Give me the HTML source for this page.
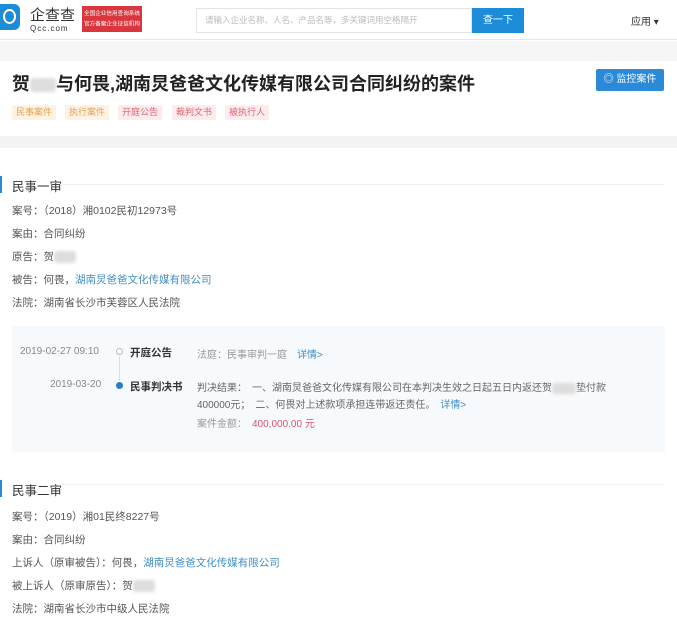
<!DOCTYPE html>
<html><head><meta charset="utf-8"><style>
*{margin:0;padding:0;box-sizing:border-box}
body{width:677px;height:625px;background:#fff;font-family:"Liberation Sans","Noto Sans CJK SC",sans-serif;position:relative;overflow:hidden;color:#333}
.a{position:absolute;white-space:nowrap}
.s{font-size:10.5px;color:#555}
.l{color:#3f8fc7}
.blur{display:inline-block;background:#ddd;border-radius:3px;filter:blur(1.5px);vertical-align:middle}
.tag{position:absolute;top:105px;height:15px;font-size:9px;line-height:15px;padding:0 4px}
</style></head><body>
<div class="a" style="left:0;top:0;width:677px;height:40px;border-bottom:1px solid #e6e6e6"></div>
<div class="a" style="left:0;top:4px;width:20px;height:26px;background:#1d8cd8;border-radius:0 6px 6px 0"></div>
<div class="a" style="left:3px;top:9px;width:13px;height:15px;border:2px solid #fff;border-radius:50%"></div>
<div class="a" style="left:30px;top:4px;font-size:15px;color:#333">企查查</div>
<div class="a" style="left:30px;top:24px;font-size:8px;letter-spacing:1px;color:#333">Qcc.com</div>
<div class="a" style="left:82px;top:6px;width:60px;height:26px;background:#d9363e"></div>
<div class="a" style="left:84px;top:8px;color:#fff;font-size:8px;line-height:15px;transform:scale(0.7);transform-origin:0 0">全国企业信用查询系统<br>官方备案企业征信机构</div>
<div class="a" style="left:196px;top:8px;width:276px;height:25px;border:1px solid #e3e3e3;font-size:8.5px;color:#bbb;line-height:23px;padding-left:8px">请输入企业名称、人名、产品名等，多关键词用空格隔开</div>
<div class="a" style="left:472px;top:8px;width:52px;height:25px;background:#1d8cd8;color:#fff;font-size:10px;line-height:25px;text-align:center">查一下</div>
<div class="a" style="left:631px;top:13px;font-size:10px;color:#333">应用 ▾</div>
<div class="a" style="left:0;top:41px;width:677px;height:20px;background:#f6f6f6"></div>
<div class="a" style="left:0;top:136px;width:677px;height:12px;background:#f3f3f3"></div>
<div class="a" style="left:12px;top:70px;font-size:18px;font-weight:bold;color:#222">贺<span class="blur" style="width:26px;height:14px"></span>与何畏,湖南炅爸爸文化传媒有限公司合同纠纷的案件</div>
<div class="a" style="left:596px;top:69px;width:68px;height:22px;background:#2a8ad8;color:#fff;font-size:10px;line-height:22px;text-align:center;border-radius:2px">◎ 监控案件</div>
<div class="tag" style="left:12px;background:#fdf2e3;color:#e8a24f">民事案件</div>
<div class="tag" style="left:65px;background:#fdf2e3;color:#e8a24f">执行案件</div>
<div class="tag" style="left:118px;background:#fdecee;color:#e4606d">开庭公告</div>
<div class="tag" style="left:172px;background:#fdecee;color:#e4606d">裁判文书</div>
<div class="tag" style="left:225px;background:#fdecee;color:#e4606d">被执行人</div>
<div class="a" style="left:0;top:176px;width:2px;height:17px;background:#2a8ad8"></div>
<div class="a" style="left:62px;top:184px;width:603px;height:1px;background:#f0f0f0"></div>
<div class="a" style="left:12px;top:176px;font-size:12.5px;color:#333">民事一审</div>
<div class="a s" style="left:12px;top:203px">案号：（2018）湘0102民初12973号</div>
<div class="a s" style="left:12px;top:226px">案由：合同纠纷</div>
<div class="a s" style="left:12px;top:249px">原告：贺<span class="blur" style="width:22px;height:12px"></span></div>
<div class="a s" style="left:12px;top:272px">被告：何畏，<span class="l">湖南炅爸爸文化传媒有限公司</span></div>
<div class="a s" style="left:12px;top:295px">法院：湖南省长沙市芙蓉区人民法院</div>
<div class="a" style="left:12px;top:326px;width:653px;height:126px;background:#f7fafd"></div>
<div class="a" style="left:20px;top:346px;font-size:10px;color:#888">2019-02-27 09:10</div>
<div class="a" style="left:116px;top:348px;width:7px;height:7px;border:1px solid #bbb;border-radius:50%;background:#fff"></div>
<div class="a" style="left:119px;top:356px;width:1px;height:25px;background:#ddd"></div>
<div class="a" style="left:130px;top:345px;font-size:10.5px;font-weight:bold;color:#333">开庭公告</div>
<div class="a" style="left:197px;top:346px;font-size:10px;color:#999">法庭：民事审判一庭　<span class="l">详情&gt;</span></div>
<div class="a" style="left:50px;top:379px;font-size:10px;color:#888">2019-03-20</div>
<div class="a" style="left:116px;top:382px;width:7px;height:7px;border-radius:50%;background:#2a7cc8"></div>
<div class="a" style="left:130px;top:379px;font-size:10.5px;font-weight:bold;color:#333">民事判决书</div>
<div class="a" style="left:197px;top:379px;font-size:10px;color:#666">判决结果：　一、湖南炅爸爸文化传媒有限公司在本判决生效之日起五日内返还贺<span class="blur" style="width:24px;height:11px"></span>垫付款</div>
<div class="a" style="left:197px;top:396px;font-size:10px;color:#666">400000元；　二、何畏对上述款项承担连带返还责任。　<span class="l">详情&gt;</span></div>
<div class="a" style="left:197px;top:415px;font-size:10px;color:#999">案件金额：　<span style="color:#d9536a">400,000.00 元</span></div>
<div class="a" style="left:0;top:480px;width:2px;height:17px;background:#2a8ad8"></div>
<div class="a" style="left:62px;top:484px;width:603px;height:1px;background:#f0f0f0"></div>
<div class="a" style="left:12px;top:480px;font-size:12.5px;color:#333">民事二审</div>
<div class="a s" style="left:12px;top:509px">案号：（2019）湘01民终8227号</div>
<div class="a s" style="left:12px;top:532px">案由：合同纠纷</div>
<div class="a s" style="left:12px;top:555px">上诉人（原审被告）：何畏，<span class="l">湖南炅爸爸文化传媒有限公司</span></div>
<div class="a s" style="left:12px;top:578px">被上诉人（原审原告）：贺<span class="blur" style="width:22px;height:12px"></span></div>
<div class="a s" style="left:12px;top:601px">法院：湖南省长沙市中级人民法院</div>
</body></html>
